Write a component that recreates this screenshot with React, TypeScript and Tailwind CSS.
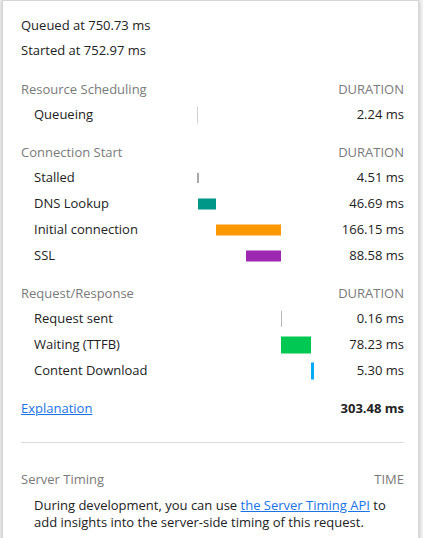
import React from "react";

type Entry = {
  label: string;
  value: string;
  left: number;
  width: number;
  height: number;
  color: string;
};

type Section = {
  title: string;
  gap: string;
  entries: Entry[];
};

const sections: Section[] = [
  {
    title: "Resource Scheduling",
    gap: "mt-[15px]",
    entries: [{ label: "Queueing", value: "2.24 ms", left: 0, width: 1, height: 17, color: "#d0d0d0" }],
  },
  {
    title: "Connection Start",
    gap: "mt-[13px]",
    entries: [
      { label: "Stalled", value: "4.51 ms", left: 0, width: 2, height: 10, color: "#a8a8a8" },
      { label: "DNS Lookup", value: "46.69 ms", left: 1, width: 18, height: 11, color: "#009688" },
      { label: "Initial connection", value: "166.15 ms", left: 19, width: 65, height: 11, color: "#ff9800" },
      { label: "SSL", value: "88.58 ms", left: 49, width: 35, height: 11, color: "#9c27b0" },
    ],
  },
  {
    title: "Request/Response",
    gap: "mt-[13px]",
    entries: [
      { label: "Request sent", value: "0.16 ms", left: 84, width: 1, height: 16, color: "#b8b8b8" },
      { label: "Waiting (TTFB)", value: "78.23 ms", left: 84, width: 30, height: 17, color: "#00c853" },
      { label: "Content Download", value: "5.30 ms", left: 114, width: 3, height: 17, color: "#03a9f4" },
    ],
  },
];

const font = { fontFamily: '"Open Sans", "Noto Sans", sans-serif' };

function TimingRow({ entry }: { entry: Entry }) {
  return (
    <div className="grid h-[26px] grid-cols-[1fr_118px_89px] items-center">
      <div className="pl-[13px] text-[#222]">{entry.label}</div>
      <div className="relative h-full">
        {/* bar placement comes from the timing data */}
        <div
          className="absolute top-1/2 -translate-y-1/2"
          style={{ left: entry.left, width: entry.width, height: entry.height, backgroundColor: entry.color }}
        />
      </div>
      <div className="text-right text-[#222]">{entry.value}</div>
    </div>
  );
}

function SectionHeader({ title, right }: { title: string; right: string }) {
  return (
    <div className="flex h-[24px] items-center justify-between text-[#7a7a7a]">
      <span>{title}</span>
      <span>{right}</span>
    </div>
  );
}

export default function App() {
  return (
    <div className="h-[538px] w-[423px] overflow-hidden bg-[#f3f3f3]">
      <div
        className="ml-[2px] h-[560px] w-[417px] border border-[#d6d6d6] bg-white pl-[18px] pr-[14px] pt-[12px] text-[13px] shadow-[0_1px_4px_rgba(0,0,0,0.25)]"
        style={font}
      >
        <div className="flex h-[25px] items-center text-[#222]">Queued at 750.73 ms</div>
        <div className="flex h-[25px] items-center text-[#222]">Started at 752.97 ms</div>

        {sections.map((section) => (
          <div key={section.title} className={section.gap}>
            <SectionHeader title={section.title} right="DURATION" />
            {section.entries.map((entry) => (
              <TimingRow key={entry.label} entry={entry} />
            ))}
          </div>
        ))}

        <div className="mt-[12px] flex h-[26px] items-center justify-between">
          <a href="#" className="text-[#1a73e8] underline">
            Explanation
          </a>
          <span className="font-bold text-[#222]">303.48 ms</span>
        </div>

        <div className="mt-[20px] h-px bg-[#dcdcdc]" />

        <div className="mt-[25px]">
          <SectionHeader title="Server Timing" right="TIME" />
          <p className="mt-[5px] pl-[13px] pr-[10px] leading-[17px] text-[#222]">
            During development, you can use{" "}
            <a href="#" className="text-[#1a73e8] underline">
              the Server Timing API
            </a>{" "}
            to add insights into the server-side timing of this request.
          </p>
        </div>
      </div>
    </div>
  );
}
